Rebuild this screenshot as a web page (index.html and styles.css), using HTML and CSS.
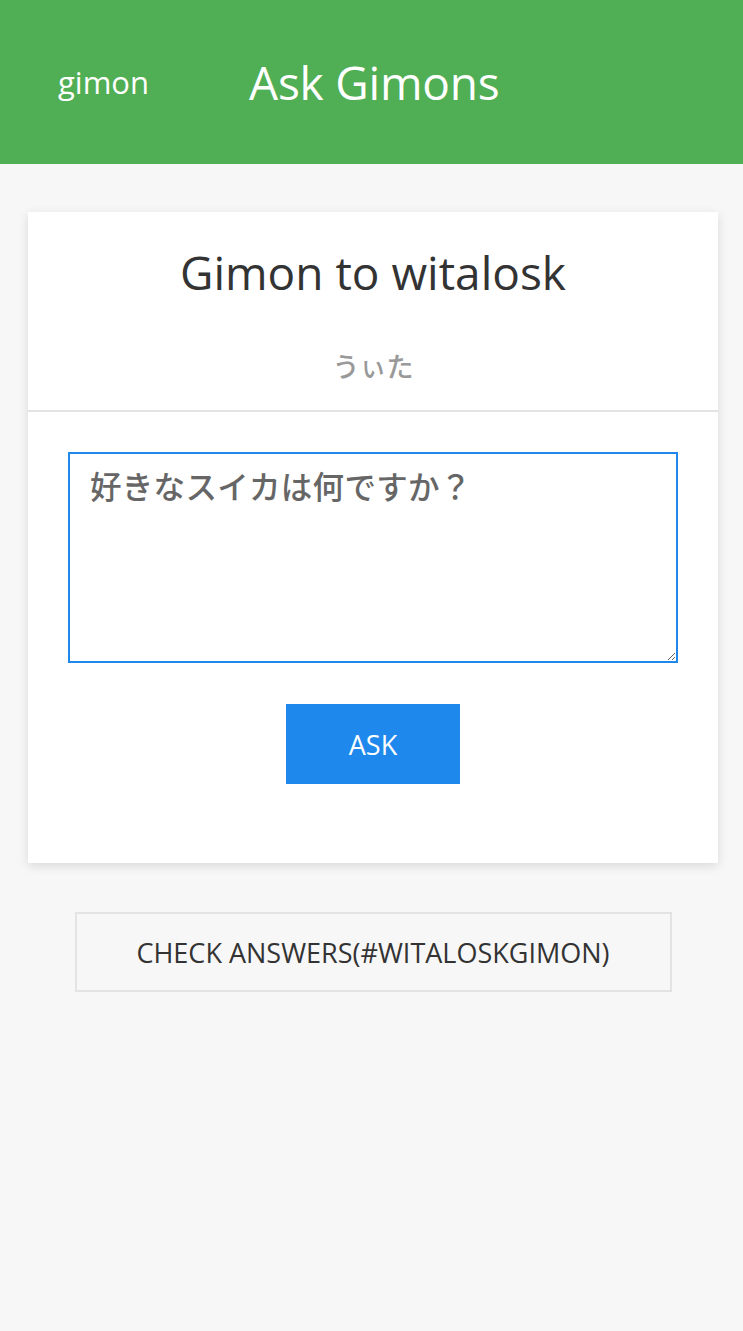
FILE: index.html
```html
<!DOCTYPE html>
<html lang="ja">
<head>
<meta charset="utf-8">
<title>Ask Gimons</title>
<link rel="stylesheet" href="styles.css">
</head>
<body>
<header class="topbar">
  <div class="brand">gimon</div>
  <h1 class="page-title">Ask Gimons</h1>
</header>
<main class="content">
  <section class="card">
    <div class="card-head">
      <h2 class="card-title">Gimon to witalosk</h2>
      <p class="card-sub">うぃた</p>
    </div>
    <form class="card-body">
      <textarea class="question">好きなスイカは何ですか？</textarea>
      <button type="button" class="ask-btn">ASK</button>
    </form>
  </section>
  <a class="check-btn" href="#">CHECK ANSWERS(#WITALOSKGIMON)</a>
</main>
</body>
</html>
```
FILE: styles.css
```css
* { box-sizing: border-box; }
html, body { margin: 0; padding: 0; }
body {
  background: #f7f7f7;
  font-family: "Open Sans", "Noto Sans CJK JP", sans-serif;
  color: #333;
  min-height: 1331px;
}
.topbar {
  background: #50ae54;
  height: 164px;
  display: flex;
  align-items: center;
  padding-left: 58px;
  color: #fff;
}
.brand {
  font-size: 31px;
  width: 191px;
  padding-top: 0;
}
.page-title {
  margin: 0;
  font-weight: 400;
  font-size: 46px;
  letter-spacing: -0.2px;
}
.content {
  padding: 48px 25px 0 28px;
  display: flex;
  flex-direction: column;
  align-items: center;
}
.card {
  width: 690px;
  background: #fff;
  box-shadow: 0 3px 10px rgba(0,0,0,0.12);
  height: 651px;
}
.card-head {
  text-align: center;
  border-bottom: 2px solid #e3e3e3;
  height: 200px;
  padding-top: 29px;
}
.card-title {
  margin: 0;
  font-weight: 400;
  font-size: 46px;
  color: #333;
}
.card-sub {
  margin: 43px 0 0;
  font-size: 27px;
  font-weight: 500;
  color: #999;
  font-family: "Noto Sans CJK JP", sans-serif;
}
.card-body {
  padding: 40px 40px 0;
  display: flex;
  flex-direction: column;
  align-items: center;
}
.question {
  width: 610px;
  height: 211px;
  border: 2px solid #2088ea;
  padding: 8px 20px;
  font-family: "Noto Sans CJK JP", sans-serif;
  font-weight: 500;
  font-size: 31.5px;
  letter-spacing: 0.3px;
  color: #666;
  resize: vertical;
  outline: none;
}
.ask-btn {
  margin-top: 41px;
  width: 174px;
  height: 80px;
  background: #1f88ed;
  color: #fff;
  border: none;
  font-family: "Open Sans", sans-serif;
  font-size: 27px;
}
.check-btn {
  margin-top: 49px;
  width: 597px;
  height: 80px;
  border: 2px solid #e3e3e3;
  display: flex;
  align-items: center;
  justify-content: center;
  color: #333;
  text-decoration: none;
  font-size: 27px;
}
```
